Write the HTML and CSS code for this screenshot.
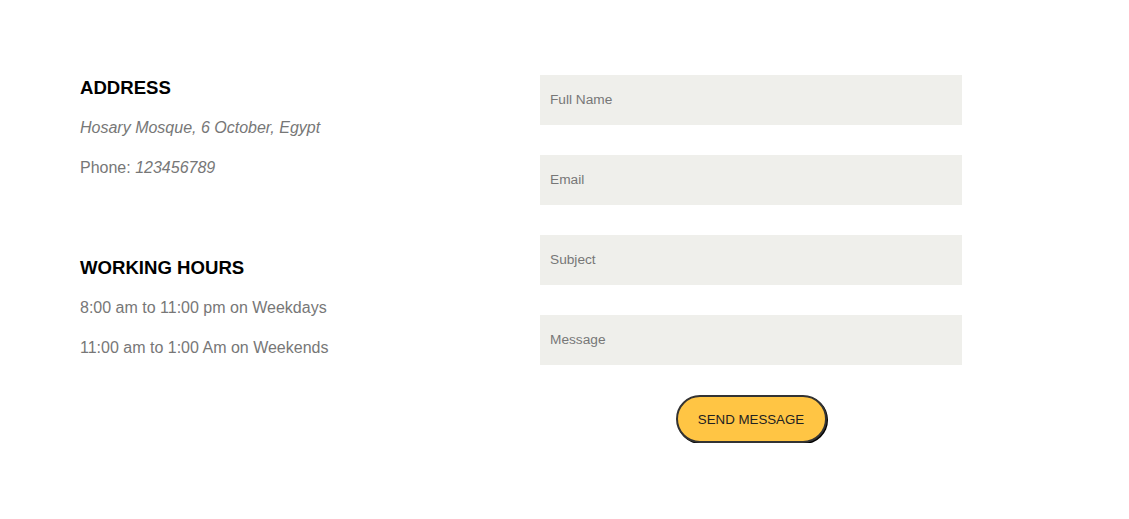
FILE: index.html
```
<!DOCTYPE html>
<html>
<head>
<meta charset="utf-8">
<link rel="stylesheet" href="styles.css">
</head>
<body>
<div class="contact">
  <div class="info">
    <h3 class="title">ADDRESS</h3>
    <p class="line"><em>Hosary Mosque, 6 October, Egypt</em></p>
    <p class="line">Phone: <em>123456789</em></p>
    <h3 class="title second">WORKING HOURS</h3>
    <p class="line">8:00 am to 11:00 pm on Weekdays</p>
    <p class="line">11:00 am to 1:00 Am on Weekends</p>
  </div>
  <form class="form">
    <input class="field" type="text" placeholder="Full Name">
    <input class="field" type="email" placeholder="Email">
    <input class="field" type="text" placeholder="Subject">
    <input class="field" type="text" placeholder="Message">
    <button class="send" type="button">SEND MESSAGE</button>
  </form>
</div>
</body>
</html>
```
FILE: styles.css
```
html, body {
  margin: 0;
  padding: 0;
  background: #fff;
  font-family: "Liberation Sans", Arial, sans-serif;
}
.contact {
  display: grid;
  grid-template-columns: 460px 422px;
  padding: 75px 0 0 80px;
}
.info {
  padding-top: 3px;
}
.title {
  margin: 0;
  font-size: 18.6px;
  line-height: 20px;
  font-weight: bold;
  color: #000;
}
.title.second {
  margin-top: 80px;
}
.line {
  margin: 20px 0 0;
  font-size: 16px;
  line-height: 20px;
  color: #777;
}
.form {
  display: flex;
  flex-direction: column;
  align-items: center;
  gap: 30px;
}
.field {
  box-sizing: border-box;
  width: 422px;
  height: 50px;
  border: none;
  outline: none;
  background: #efefeb;
  padding: 0 10px 2px;
  font-family: "Liberation Sans", Arial, sans-serif;
  font-size: 13.7px;
  color: #555;
}
.field::placeholder {
  color: #777;
}
.send {
  box-sizing: border-box;
  height: 48px;
  width: 151px;
  padding: 0;
  background: #ffc544;
  border: 2px solid #333;
  border-radius: 24px;
  box-shadow: 1px 1px 0 #000;
  font-family: "Liberation Sans", Arial, sans-serif;
  font-size: 13.3px;
  color: #222;
  cursor: pointer;
}
```
